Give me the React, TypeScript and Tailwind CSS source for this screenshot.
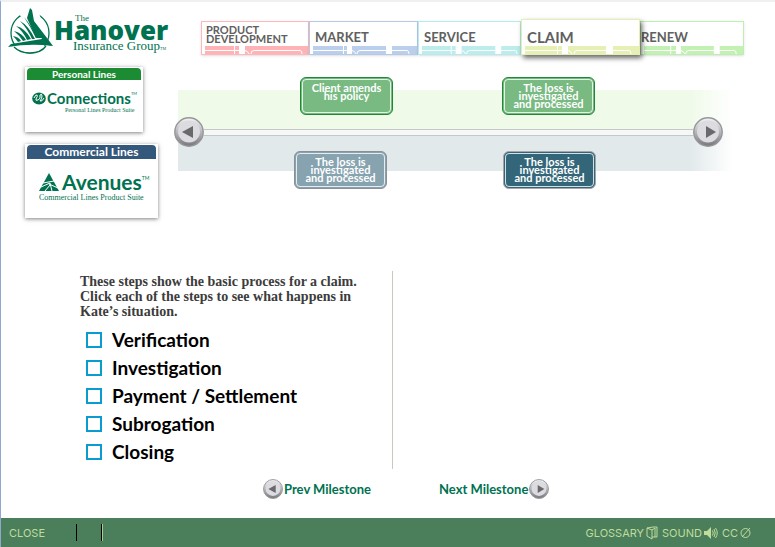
import React, { useId } from "react";

const gothic = "font-['Century_Gothic','Lato',sans-serif]";
const palatino = "font-['Liberation_Serif',serif]";

type Road = {
  width: number;
  lane: number;
  gap: [number, number];
  bend: number;
  gap2?: [number, number];
  end: number;
};

type Tab = {
  lines: string[];
  text: string;
  frame: string;
  band: string;
  road: Road;
};

const tabs: Tab[] = [
  {
    lines: ["PRODUCT", "DEVELOPMENT"],
    text: "text-[11px] leading-[9px] pt-[3px] pl-[4px]",
    frame: "mt-[2px] border-[#fcb8ba] shadow-sm",
    band: "bg-[#feb4b6]",
    road: { width: 103, lane: 29, gap: [34, 40], bend: 47, end: 97 },
  },
  {
    lines: ["MARKET"],
    text: "text-[13px] leading-[16px] pt-[7px] pl-[5px]",
    frame: "mt-[2px] border-[#b3cbe8] shadow-sm",
    band: "bg-[#bbcfec]",
    road: { width: 104, lane: 30, gap: [34, 39], bend: 45, gap2: [73, 79], end: 96 },
  },
  {
    lines: ["SERVICE"],
    text: "text-[13px] leading-[16px] pt-[7px] pl-[5px]",
    frame: "mt-[2px] border-[#b3ecec] shadow-sm",
    band: "bg-[#bdecec]",
    road: { width: 99, lane: 29, gap: [34, 40], bend: 46, gap2: [74, 80], end: 96 },
  },
  {
    lines: ["CLAIM"],
    text: "text-[15px] leading-[18px] pt-[8px] pl-[5px]",
    frame: "z-10 border-[#e3efb4] shadow-[2px_3px_5px_rgba(0,0,0,0.6)]",
    band: "bg-[#e6f0b4]",
    road: { width: 114, lane: 32, gap: [37, 43], bend: 50, gap2: [81, 88], end: 106 },
  },
  {
    lines: ["RENEW"],
    text: "text-[13px] leading-[16px] pt-[7px] pl-0",
    frame: "mt-[2px] border-[#bcf0ae] shadow-sm",
    band: "bg-[#c3f1b3]",
    road: { width: 102, lane: 27, gap: [33, 38], bend: 44, gap2: [72, 78], end: 95 },
  },
];

function RoadStrip({ road, band }: { road: Road; band: string }) {
  const { width, lane, gap, bend, gap2, end } = road;
  return (
    <svg
      className={`block h-2 w-full ${band}`}
      viewBox={`0 0 ${width} 8`}
      preserveAspectRatio="none"
      aria-hidden="true"
    >
      <g stroke="#fff" strokeWidth="1" fill="none">
        <path d={`M0 4.5H${gap[0]}M${lane + 0.5} 0V8`} />
        <path d={`M${gap[1]} 4.5Q${gap[1] + 3} 5 ${gap[1] + 4} 8`} />
        <path d={`M${bend - 1} 8Q${bend - 1} 4.5 ${bend + 2} 4.5H${end - 2}Q${end} 4.5 ${end} 8`} />
      </g>
      <rect x={gap[0]} width={gap[1] - gap[0]} height="8" fill="#fff" />
      {gap2 && <rect x={gap2[0]} width={gap2[1] - gap2[0]} height="8" fill="#fff" />}
    </svg>
  );
}

function TabBar() {
  return (
    <nav
      aria-label="Milestones"
      className="mt-[17px] mr-[31px] ml-[27px] grid h-[36px] grid-cols-[108fr_109fr_103fr_119fr_104fr]"
    >
      {tabs.map((t) => (
        <button
          key={t.lines[0]}
          type="button"
          className={`flex flex-col justify-between border bg-white text-left font-bold text-[#606060] ${t.frame}`}
        >
          <span className={t.text}>
            {t.lines.map((l) => (
              <span key={l} className="block">
                {l}
              </span>
            ))}
          </span>
          <span className="block w-full pl-[3px]">
            <RoadStrip road={t.road} band={t.band} />
          </span>
        </button>
      ))}
    </nav>
  );
}

function HanoverLogo() {
  return (
    <div className="mt-[6px] ml-[7px] flex h-[46px] text-[#00724f]">
      <svg width="46" height="46" viewBox="0 0 46 46" aria-hidden="true">
        <ellipse cx="22" cy="25" rx="19" ry="20" fill="none" stroke="currentColor" strokeWidth="1.3" />
        <path d="M14 2H30L36 20L24 12L12 8Z" fill="#fff" />
        <path d="M22 0L24 2L26 13L39 30L45 38Q38 36 31 36L34 30L28 30L19 10Z" fill="currentColor" />
        <path
          d="M8 18Q17 20 23 31L19 32Q15 23 8 18ZM12 13Q20 17 27 31L24 31Q19 20 12 13ZM6 23Q14 25 18 32L15 33Q11 27 6 23ZM5 28Q11 29 13 33L10 34Q8 31 5 28ZM16 9Q23 17 29 30L28 30Q22 18 16 9Z"
          fill="currentColor"
        />
        <path d="M5 38Q18 34 38 38Q32 45 22 45Q11 45 5 38Z" fill="#fff" />
        <path d="M6 39Q12 45 22 45Q33 45 38 38" fill="none" stroke="currentColor" strokeWidth="1.3" />
        <path d="M0 39L3 36L34 31L36 34L45 38Q22 35 0 39Z" fill="currentColor" />
      </svg>
      <div className="flex flex-col whitespace-nowrap pt-[6px]">
        <span className={`${palatino} pl-[21px] text-[9px] leading-[8px]`}>The</span>
        <span className="font-['Open_Sans',sans-serif] text-[26px] leading-[16px] font-extrabold">Hanover</span>
        <span className={`${palatino} pl-[19px] text-[13px] leading-[15px]`}>
          Insurance Group<span className="text-[4px]">TM</span>
        </span>
      </div>
    </div>
  );
}

function ProductCards() {
  return (
    <div className="ml-6 flex flex-col items-start gap-[12px] pt-[13px] whitespace-nowrap">
      <a
        href="#personal"
        className="flex h-[65px] w-[118px] flex-col bg-white px-[2px] pt-px text-[#00724f] shadow-[0_1px_4px_rgba(0,0,0,0.5)]"
      >
        <span className="rounded-t-sm bg-[#1c8c34] text-center text-[10px] leading-[12px] font-bold text-white">
          Personal Lines
        </span>
        <span className="flex items-center gap-px pt-[9px] pl-[5px]">
          <svg width="14" height="13" viewBox="0 0 14 13" aria-hidden="true">
            <ellipse cx="7" cy="6.5" rx="6.8" ry="6" fill="currentColor" />
            <path
              d="M2 6Q4 2 5 3T4 7Q3 9 6 8T8 3Q10 1 10 4T8 9Q10 10 12 6"
              fill="none"
              stroke="#fff"
              strokeWidth="1"
            />
          </svg>
          <span className="flex text-[15px] leading-[18px] font-bold">
            Connections<span className="text-[4px] leading-[10px] font-normal">TM</span>
          </span>
        </span>
        <span className={`${palatino} pl-[38px] text-[6px] leading-[7px]`}>Personal Lines Product Suite</span>
      </a>
      <a
        href="#commercial"
        className="flex h-[74px] w-[133px] flex-col bg-white px-[2px] pt-px text-[#00724f] shadow-[0_1px_4px_rgba(0,0,0,0.5)]"
      >
        <span className="rounded-t-sm bg-[#34587c] text-center text-xs leading-[14px] font-bold text-white">
          Commercial Lines
        </span>
        <span className="flex items-center gap-[3px] pt-[12px] pl-[12px]">
          <svg width="20" height="18" viewBox="0 0 20 18" aria-hidden="true">
            <path d="M10 0L20 18H0Z" fill="currentColor" />
            <path d="M4 10L15 8M2 14L11 10L13 18M10 11L19 15M6 18L11 12" stroke="#fff" strokeWidth="1" fill="none" />
          </svg>
          <span className="flex text-[21px] leading-[22px] font-bold">
            Avenues<span className="text-[5px] leading-[14px] font-normal">TM</span>
          </span>
        </span>
        <span className={`${palatino} pl-[12px] text-[8px] leading-[9px]`}>Commercial Lines Product Suite</span>
      </a>
    </div>
  );
}

function ArrowDisc({ direction }: { direction: "left" | "right" }) {
  const id = useId();
  return (
    <svg className="block size-full" viewBox="0 0 30 30" aria-hidden="true">
      <defs>
        <linearGradient id={id} x1="0" y1="0" x2="0" y2="1">
          <stop offset="0" stopColor="#f4f4f6" />
          <stop offset="0.5" stopColor="#b8b8bc" />
          <stop offset="1" stopColor="#77777b" />
        </linearGradient>
      </defs>
      <circle cx="15" cy="15" r="14.2" fill={`url(#${id})`} stroke="#96969b" strokeWidth="1.4" />
      <circle cx="15" cy="14.5" r="11" fill="#dcdce0" />
      <path d={direction === "left" ? "M8 15L19 9V21Z" : "M23 15L13 9V21Z"} fill="#69696c" />
    </svg>
  );
}

function RoundArrow({ direction, label }: { direction: "left" | "right"; label: string }) {
  return (
    <button type="button" aria-label={label} className="block size-[30px] shrink-0">
      <ArrowDisc direction={direction} />
    </button>
  );
}

function Milestone({ lines, tone }: { lines: string[]; tone: string }) {
  return (
    <button
      type="button"
      className={`flex h-[38px] w-[93px] shrink-0 flex-col items-center rounded-md border p-px text-center text-[11px] leading-[8px] font-bold text-white ${tone}`}
    >
      <span className="flex h-full w-full flex-col rounded-[4px] border border-white/80 pt-[4px] whitespace-nowrap">
        {lines.map((l) => (
          <span key={l}>{l}</span>
        ))}
      </span>
    </button>
  );
}

const loss = ["The loss is", "investigated", "and processed"];

function Timeline() {
  return (
    <section aria-label="Timeline" className="mt-[22px] mr-[42px] grid">
      <div className="col-start-1 row-start-1 ml-[4px] pt-[13px] [mask-image:linear-gradient(to_right,black_92%,transparent)]">
        <div className="h-[41px] bg-[#effae9]" />
        <div className="h-[40px] bg-[#e1e9eb]" />
      </div>
      <div className="z-10 col-start-1 row-start-1 mr-[10px] flex items-center pb-[2px]">
        <RoundArrow direction="left" label="Scroll back" />
        <div className="h-[7px] flex-1 border-y border-[#c3c9c9] bg-[#f6f8f8]" />
        <RoundArrow direction="right" label="Scroll forward" />
      </div>
      <div className="pointer-events-none z-20 col-start-1 row-start-1 flex flex-col gap-[36px] justify-self-start *:*:pointer-events-auto">
        <div className="flex gap-[109px] pl-[126px]">
          <Milestone lines={["Client amends", "his policy"]} tone="border-[#1c8c34] bg-[#78ba82]" />
          <Milestone lines={loss} tone="border-[#1c8c34] bg-[#78ba82]" />
        </div>
        <div className="flex gap-[116px] pl-[120px]">
          <Milestone lines={loss} tone="border-[#8d8f98] bg-[#86a3af]" />
          <Milestone lines={loss} tone="border-[#a5a5ac] bg-[#336679]" />
        </div>
      </div>
    </section>
  );
}

const steps = ["Verification", "Investigation", "Payment / Settlement", "Subrogation", "Closing"];

function Steps() {
  return (
    <main className="mt-[53px] ml-[79px] w-[313px] border-r border-[#c9c9bd] pt-[3px]">
      <p className={`${palatino} text-[14px] leading-[15px] font-bold text-[#3c3c3c]`}>
        These steps show the basic process for a claim.
        <br />
        Click each of the steps to see what happens in
        <br />
        Kate’s situation.
      </p>
      <ul className="mt-[7px] pb-[3px] pl-[6px]">
        {steps.map((s) => (
          <li key={s}>
            <label className="flex h-7 items-center gap-[10px] text-[19px] leading-7 font-bold text-black">
              <input type="checkbox" className="size-4 appearance-none border-2 border-[#0a9bd0] bg-white checked:bg-[#0a9bd0]" />
              {s}
            </label>
          </li>
        ))}
      </ul>
    </main>
  );
}

function MilestoneNav() {
  const item = "flex items-center gap-px text-[13px] leading-5 font-bold text-[#00724f]";
  return (
    <nav aria-label="Milestone pages" className="mt-[10px] ml-[262px] flex gap-[68px]">
      <button type="button" className={item}>
        <span className="size-5">
          <ArrowDisc direction="left" />
        </span>
        Prev Milestone
      </button>
      <button type="button" className={item}>
        Next Milestone
        <span className="size-5">
          <ArrowDisc direction="right" />
        </span>
      </button>
    </nav>
  );
}

function Footer() {
  const item = "flex items-center gap-[2px]";
  return (
    <footer className="mt-auto flex h-[29px] items-center bg-[#4b7f5b] font-['Inter',sans-serif] text-[11px] leading-[12px] text-[#bfdc9c]">
      <button type="button" className="w-[75px] pl-2 text-left">
        CLOSE
      </button>
      <span className="h-[17px] w-[26px] border-x border-black shadow-[1px_0_0_#a5cf8f]" />
      <div className="mr-[24px] ml-auto flex items-center gap-[4px]">
        <button type="button" className={item}>
          GLOSSARY
          <svg width="12" height="14" viewBox="0 0 12 14" fill="none" stroke="currentColor" aria-hidden="true">
            <path d="M1 2L6 4V13L1 10ZM1 2L7 1H11V11H6M6 4L9 2V11" />
          </svg>
        </button>
        <button type="button" className={item}>
          SOUND
          <svg width="14" height="12" viewBox="0 0 14 12" aria-hidden="true">
            <path d="M0 4H3L7 0V12L3 8H0Z" fill="currentColor" />
            <path d="M8.500 3.500Q10 6 8.500 8.500M10 2Q12.500 6 10 10M11.500 1Q15 6 11.500 11" fill="none" stroke="currentColor" />
          </svg>
        </button>
        <button type="button" className={item}>
          CC
          <svg width="11" height="12" viewBox="0 0 11 12" fill="none" stroke="currentColor" aria-hidden="true">
            <circle cx="5.500" cy="6" r="4.500" />
            <path d="M2 10L10 1" />
          </svg>
        </button>
      </div>
    </footer>
  );
}

export default function App() {
  return (
    <div className={`${gothic} flex min-h-screen flex-col border-t-2 border-l border-t-[#f0f0f2] border-l-[#8fa8d0] bg-white`}>
      <header className="grid grid-cols-[173px_1fr]">
        <div>
          <HanoverLogo />
          <ProductCards />
        </div>
        <div>
          <TabBar />
          <Timeline />
        </div>
      </header>
      <Steps />
      <MilestoneNav />
      <Footer />
    </div>
  );
}
